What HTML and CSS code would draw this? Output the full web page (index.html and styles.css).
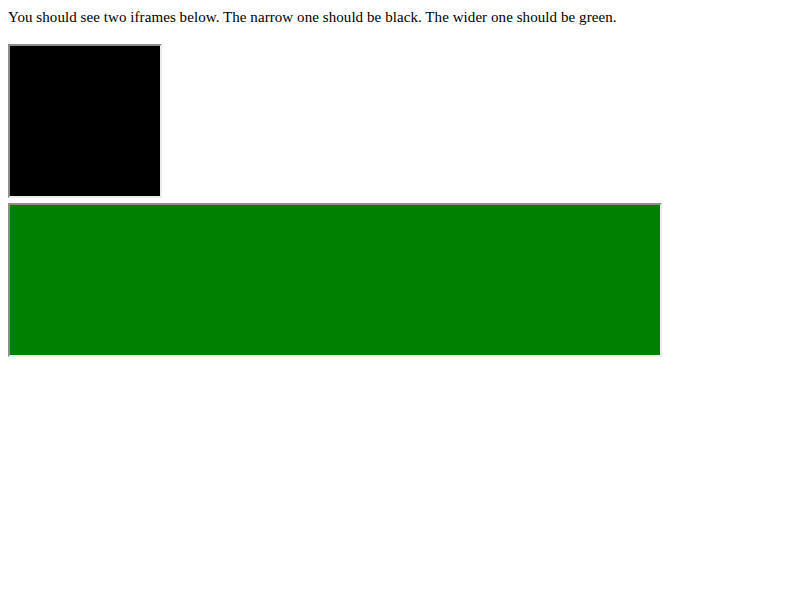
FILE: index.html
```html
<!DOCTYPE html>
<html>
<head>
<meta charset="utf-8">
<link rel="stylesheet" href="styles.css">
</head>
<body>
<p class="intro">You should see two iframes below. The narrow one should be black. The wider one should be green.</p>
<div class="frames">
  <div class="frame narrow"></div>
  <div class="frame wide"></div>
</div>
</body>
</html>
```

FILE: styles.css
```css
html, body {
  background: #ffffff;
}
body {
  margin: 8px;
  font-family: "Liberation Serif", "Times New Roman", serif;
  font-size: 16px;
  color: #000000;
}
.intro {
  margin: 0;
  height: 18px;
  line-height: 19px;
  font-size: 15px;
  letter-spacing: 0.07px;
  margin-bottom: 18px;
}
.frames {
  display: flex;
  flex-direction: column;
  align-items: flex-start;
  gap: 5px;
}
.frame {
  box-sizing: border-box;
  height: 154px;
  border-width: 2px;
  border-style: solid;
  border-top-color: #8c8c8c;
  border-left-color: #8c8c8c;
  border-bottom-color: #ededed;
  border-right-color: #ededed;
}
.narrow {
  width: 154px;
  background: #000000;
}
.wide {
  width: 654px;
  background: #008000;
}
```
